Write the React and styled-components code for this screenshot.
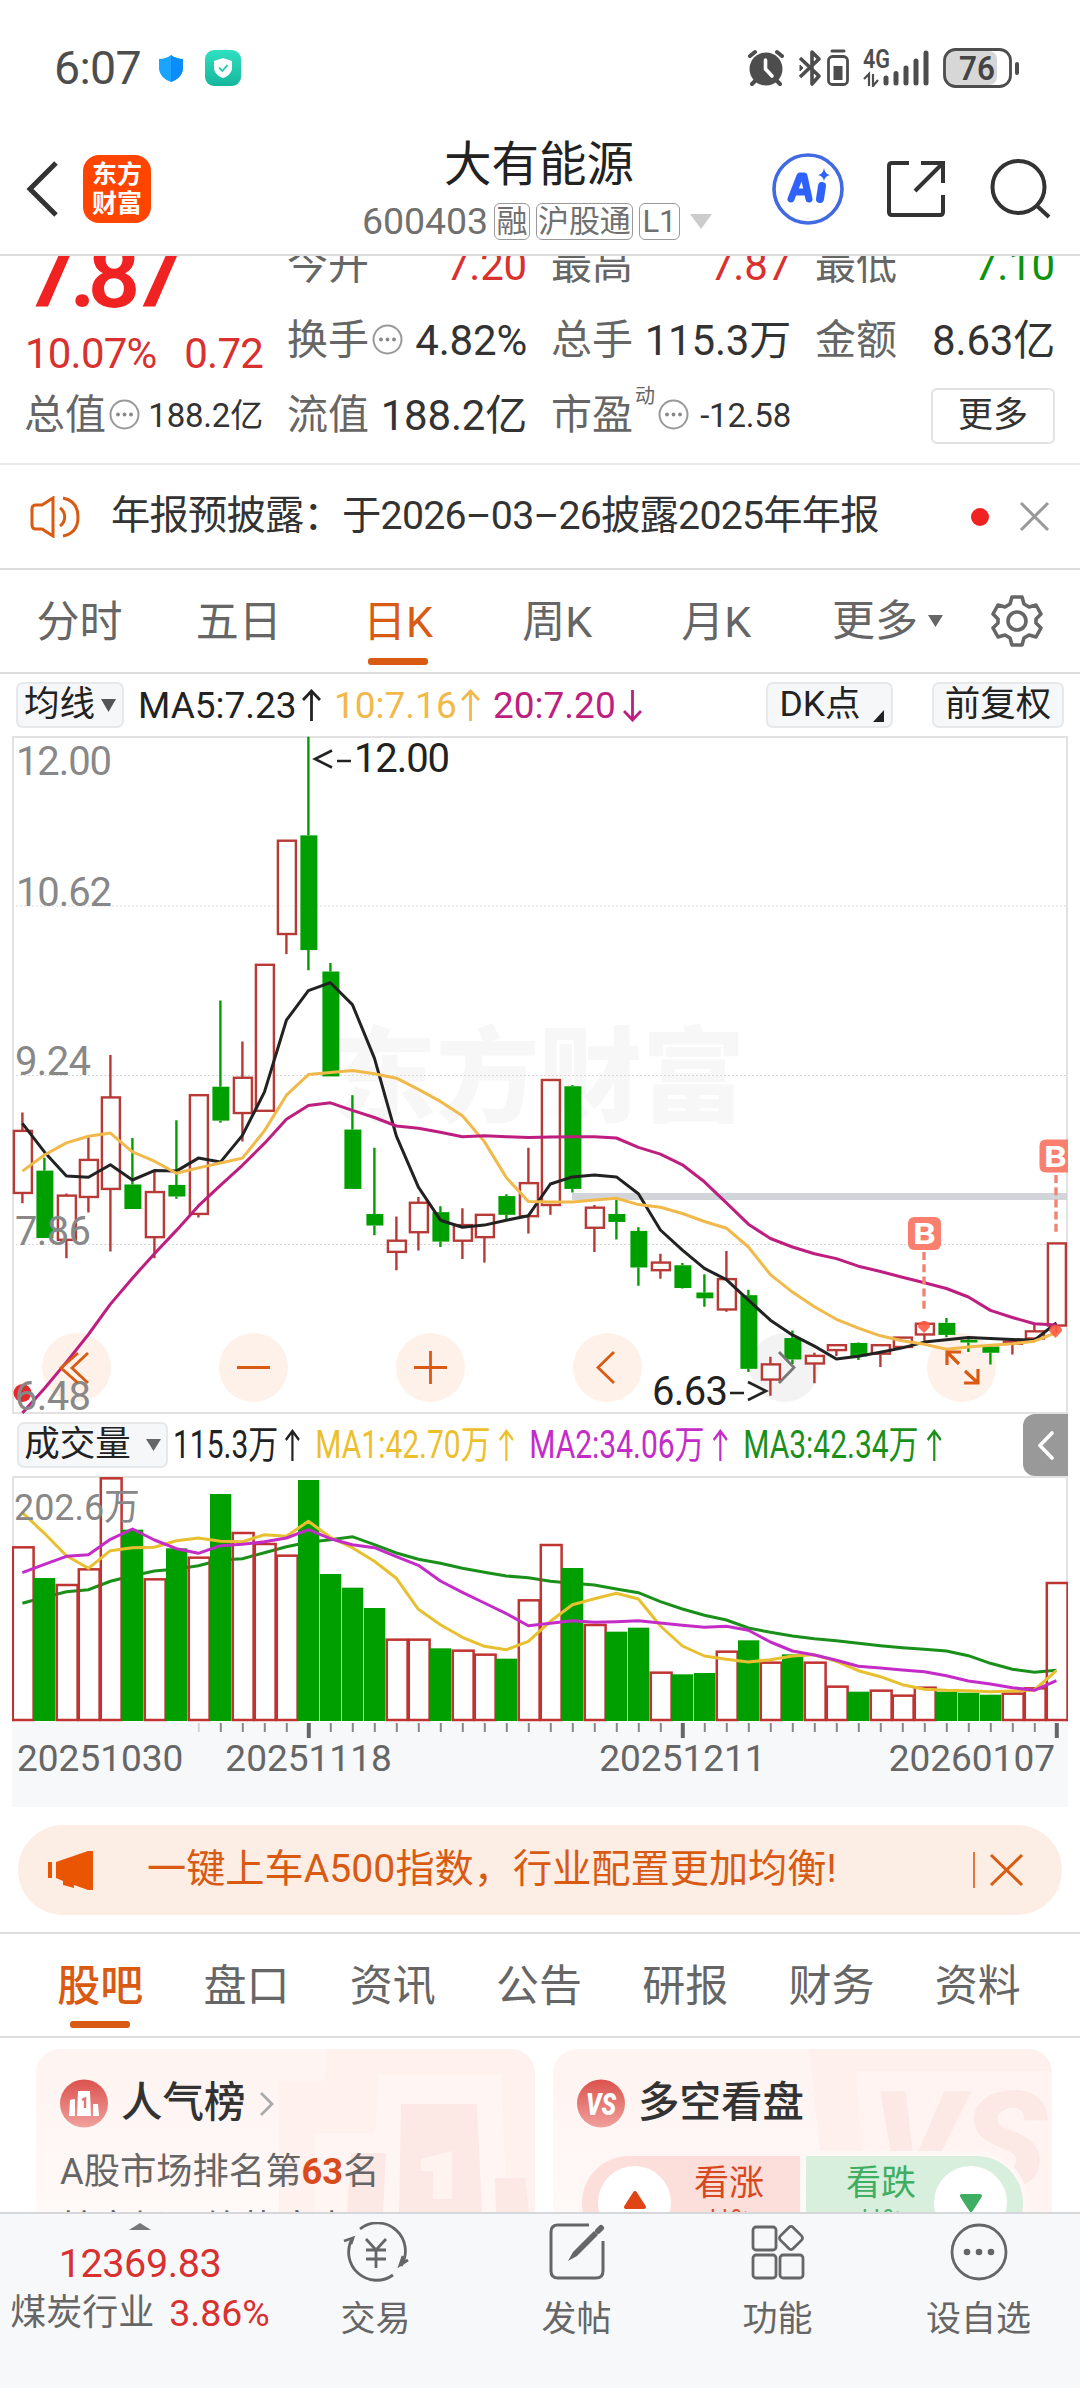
import { Fragment } from 'react';
import styled, { createGlobalStyle } from 'styled-components';

const RED = '#d93030';
const ORANGE = '#d95a13';
const GREY = '#666';
const UP = '#b73a36';
const DOWN = '#009f00';

// Velas: [tipo, máximo, cuerpo arriba, cuerpo abajo, mínimo]
const candles = [
  ['u', 857, 898, 1037, 1060], ['d', 958, 987, 1138, 1138], ['u', 1038, 1043, 1142, 1183],
  ['u', 912, 963, 1046, 1081], ['u', 728, 823, 1028, 1168], ['d', 914, 1018, 1073, 1073],
  ['u', 985, 1035, 1136, 1183], ['d', 874, 1019, 1045, 1050], ['u', 817, 818, 1084, 1092],
  ['d', 606, 799, 875, 880], ['u', 698, 779, 858, 922], ['u', 526, 526, 853, 853],
  ['u', 248, 248, 457, 502], ['d', 15, 236, 493, 538], ['d', 522, 541, 776, 776],
  ['d', 818, 895, 1028, 1028], ['d', 936, 1084, 1110, 1132], ['u', 1090, 1144, 1169, 1210],
  ['u', 1046, 1059, 1125, 1166], ['d', 1067, 1080, 1146, 1158], ['u', 1071, 1109, 1144, 1185],
  ['u', 1086, 1086, 1136, 1193], ['d', 1040, 1044, 1086, 1098], ['u', 936, 1015, 1089, 1128],
  ['u', 784, 784, 1064, 1086], ['d', 795, 798, 1028, 1036], ['u', 1064, 1070, 1115, 1169],
  ['d', 1053, 1084, 1102, 1141], ['d', 1114, 1122, 1204, 1245], ['u', 1173, 1193, 1210, 1229],
  ['d', 1194, 1199, 1250, 1251], ['d', 1219, 1260, 1273, 1292], ['u', 1167, 1230, 1298, 1303],
  ['d', 1254, 1266, 1431, 1438], ['u', 1404, 1421, 1455, 1491], ['d', 1345, 1362, 1410, 1420],
  ['u', 1395, 1402, 1419, 1463], ['u', 1377, 1378, 1389, 1402], ['d', 1372, 1373, 1403, 1411],
  ['u', 1378, 1378, 1397, 1427], ['u', 1361, 1361, 1382, 1382], ['u', 1324, 1330, 1354, 1368],
  ['d', 1317, 1328, 1355, 1360], ['d', 1358, 1366, 1372, 1393], ['d', 1378, 1381, 1395, 1421],
  ['u', 1369, 1370, 1375, 1399], ['u', 1330, 1347, 1363, 1366], ['u', 1150, 1150, 1334, 1350],
];

const priceLines = [
  { color: '#222', data: [881, 945, 999, 1002, 974, 1008, 987, 988, 959, 968, 908, 811, 650, 584, 566, 615, 735, 910, 1024, 1098, 1114, 1109, 1098, 1088, 1017, 1001, 997, 1001, 1039, 1120, 1165, 1206, 1231, 1277, 1322, 1355, 1380, 1409, 1403, 1394, 1384, 1371, 1366, 1361, 1363, 1365, 1367, 1328] },
  { color: '#f1b94a', data: [988, 952, 925, 910, 903, 945, 966, 993, 981, 970, 959, 898, 818, 772, 767, 763, 770, 780, 805, 832, 864, 922, 1003, 1056, 1057, 1057, 1053, 1049, 1063, 1069, 1083, 1101, 1116, 1158, 1220, 1259, 1292, 1320, 1340, 1357, 1368, 1376, 1387, 1382, 1378, 1375, 1369, 1350] },
  { color: '#bd1e7f', data: [1530, 1475, 1416, 1354, 1286, 1228, 1173, 1121, 1066, 1020, 975, 926, 872, 841, 835, 852, 868, 887, 892, 901, 911, 909, 911, 913, 912, 911, 911, 914, 935, 950, 974, 1012, 1059, 1107, 1139, 1158, 1173, 1184, 1201, 1213, 1226, 1238, 1251, 1270, 1300, 1316, 1330, 1333] },
];

const volumes = [
  439, 534, 552, 505, 232, 389, 535, 445, 470, 282, 396, 429, 464, 240, 522, 563,
  624, 716, 716, 745, 749, 761, 776, 598, 432, 504, 672, 695, 683, 815, 823, 819,
  752, 721, 785, 763, 785, 857, 875, 869, 884, 860, 875, 878, 884, 878, 862, 546,
];

const volumeLines = [
  { color: '#e8c02f', data: [338, 400, 467, 505, 452, 443, 442, 422, 414, 424, 425, 404, 409, 364, 412, 443, 484, 535, 628, 674, 712, 739, 749, 724, 664, 614, 596, 580, 597, 678, 738, 768, 778, 786, 779, 768, 764, 784, 812, 830, 854, 868, 871, 872, 875, 873, 870, 812] },
  { color: '#c42cc8', data: [518, 493, 469, 464, 418, 387, 420, 446, 460, 437, 433, 425, 414, 389, 416, 434, 443, 470, 496, 543, 577, 609, 641, 677, 670, 662, 667, 665, 662, 669, 676, 682, 679, 691, 726, 753, 765, 781, 799, 804, 810, 815, 827, 843, 852, 863, 871, 842] },
];
const volumeBase = { color: '#1a901a', data: [610, 592, 575, 569, 544, 527, 513, 507, 497, 480, 476, 458, 440, 427, 419, 410, 434, 459, 478, 490, 505, 517, 528, 533, 544, 550, 555, 567, 578, 605, 627, 646, 660, 684, 697, 708, 716, 722, 730, 737, 743, 748, 753, 767, 790, 808, 817, 811] };

// Cada vela ocupa 22px
const cx = (i) => 10.4 + i * 22;
const py = (v) => v / 2.24 - 6;
const vy = (v) => v / 3 - 76;
const toPoints = (data, scale) => data.map((v, i) => `${cx(i)},${scale(v).toFixed(1)}`).join(' ');

function Arrow({ down }) {
  return <svg width='19' height='33' viewBox='0 0 19 33' fill='none' stroke='currentColor' strokeWidth='2.8'>
    <path d={down ? 'M9.5 1V31M1 22L9.5 31L18 22' : 'M9.5 32V2M1 11L9.5 2L18 11'}/>
  </svg>
}

function Dots() {
  return <svg width='31' height='31' viewBox='0 0 31 31'>
    <circle cx='15.5' cy='15.5' r='14' fill='none' stroke='#999' strokeWidth='2'/>
    <circle cx='9' cy='15.5' r='1.9' fill='#888'/>
    <circle cx='15.5' cy='15.5' r='1.9' fill='#888'/>
    <circle cx='22' cy='15.5' r='1.9' fill='#888'/>
  </svg>
}

function Triangle({ w, h, color, up }) {
  return <svg width={w} height={h} viewBox='0 0 10 10' preserveAspectRatio='none'>
    <path d={up ? 'M0 10L5 0L10 10Z' : 'M0 0H10L5 10Z'} fill={color}/>
  </svg>
}

// Triángulo de esquinas redondeadas de los botones de voto
function VoteMark({ down }) {
  return <svg width='24' height='20' viewBox='0 0 24 20'>
    <path
      d={down ? 'M3 3H21L12 17Z' : 'M3 17H21L12 3Z'}
      fill={down ? '#3fae63' : '#e04414'}
      stroke={down ? '#3fae63' : '#e04414'}
      strokeLinejoin='round'
      strokeWidth='4'/>
  </svg>
}

function StatusBar() {
  return <Status>
    <Clock>6:07</Clock>
    <svg width='24' height='27' viewBox='0 0 24 27'>
      <path d='M12 0C15 2.500 19 3.800 24 4V13C24 20 18 25 12 27C6 25 0 20 0 13V4C5 3.800 9 2.500 12 0Z' fill='#1ba4ff'/>
      <path d='M12 0C15 2.500 19 3.800 24 4V13C24 20 18 25 12 27Z' fill='#0a8dfb'/>
    </svg>
    <GreenShield>
      <svg width='18' height='20' viewBox='0 0 18 20'>
        <path d='M9 0L18 3V10C18 15 13 19 9 20C5 19 0 15 0 10V3Z' fill='#fff'/>
        <path d='M5 9.500L8.300 13L13.500 7' fill='none' stroke='#1fc9a8' strokeWidth='1.8'/>
      </svg>
    </GreenShield>
    <StatusIcons>
      <svg width='38' height='38' viewBox='0 0 38 38'>
        <g stroke='#4d4d4d' strokeWidth='4' strokeLinecap='round'>
          <path d='M3 7L8 3M30 3L35 7M9 31L5 35M29 31L33 35'/>
        </g>
        <circle cx='19' cy='20' r='16.500' fill='#4d4d4d'/>
        <path d='M18.500 11V20L25 27' stroke='#fff' strokeWidth='3.600' fill='none' strokeLinecap='round'/>
      </svg>
      <svg width='52' height='38' viewBox='0 0 52 38' fill='none' stroke='#4d4d4d' strokeWidth='3.600' strokeLinejoin='round'>
        <path d='M2 9L21 27L14 35V3L21 10L2 28'/>
        <path d='M2 16L5 19L2 22Z' fill='#4d4d4d' strokeWidth='1'/>
        <rect x='30.500' y='7.500' width='19' height='28' rx='4' strokeWidth='2.800'/>
        <path d='M34 2H46' strokeLinecap='round' strokeWidth='3'/>
        <rect x='35.500' y='17' width='9' height='14' fill='#4d4d4d' stroke='none'/>
      </svg>
      <svg width='67' height='38' viewBox='0 0 67 38'>
        <text x='0' y='19' fontSize='25' fontWeight='600' fill='#4d4d4d' textLength='27' lengthAdjust='spacingAndGlyphs'>4G</text>
        <path d='M1 30L6 25V37M10 25V37L15 31' stroke='#4d4d4d' strokeWidth='2.200' fill='none'/>
        <g stroke='#4d4d4d' strokeWidth='5' strokeLinecap='round'>
          <path d='M23 29V34M33 24.500V34M43 19V34M53 12V34M63 4V34'/>
        </g>
      </svg>
      <svg width='76' height='40' viewBox='0 0 76 40'>
        <rect x='3' y='3' width='51' height='34' rx='8' fill='#d7d7d7'/>
        <rect x='1.500' y='1.500' width='66' height='37' rx='11' fill='none' stroke='#4d4d4d' strokeWidth='2.800'/>
        <path d='M74 16V25' stroke='#4d4d4d' strokeWidth='4' strokeLinecap='round'/>
        <text x='16' y='32' fontSize='34' fontWeight='600' fill='#444' textLength='36' lengthAdjust='spacingAndGlyphs'>76</text>
      </svg>
    </StatusIcons>
  </Status>
}

function Header() {
  return <HeaderBar>
    <svg width='33' height='56' viewBox='0 0 33 56' fill='none' stroke='#333' strokeWidth='5'>
      <path d='M30 2L4 28L30 54'/>
    </svg>
    <Logo><span>东方</span><span>财富</span></Logo>
    <TitleBox>
      <StockName>大有能源</StockName>
      <StockCode>
        600403
        <Tag $w={36}>融</Tag>
        <Tag $w={97}>沪股通</Tag>
        <Tag $w={41}>L1</Tag>
        <Triangle w={22} h={15} color='#ccc'/>
      </StockCode>
    </TitleBox>
    <svg width='72' height='72' viewBox='0 0 72 72'>
      <circle cx='36' cy='36' r='34' fill='none' stroke='#4169e1' strokeWidth='3.600'/>
      <path d='M19 46L28 23H32L37 46M23 39H35' fill='none' stroke='#2f62fa' strokeWidth='7' strokeLinecap='round' strokeLinejoin='round'/>
      <path d='M50 33L48 46' stroke='#2f62fa' strokeWidth='8' strokeLinecap='round'/>
      <path d='M52 15Q53 21 58 22Q53 23 52 28Q51 23 46 22Q51 21 52 15Z' fill='#2f62fa'/>
    </svg>
    <svg width='60' height='60' viewBox='0 0 60 60' fill='none' stroke='#333' strokeWidth='4'>
      <path d='M23 4H6Q3 4 3 7V53Q3 56 6 56H54Q57 56 57 53V36M35 4H57V24M57 4L29 32'/>
    </svg>
    <svg width='62' height='60' viewBox='0 0 62 60' fill='none' stroke='#333' strokeWidth='4'>
      <circle cx='28.500' cy='28' r='26'/>
      <path d='M46 46L59 58'/>
    </svg>
  </HeaderBar>
}

function Quotes() {
  return <QuoteSection>
    <QuoteGrid>
      <PriceCell>
        <Price>7.87</Price>
        <Change><span>10.07%</span><span>0.72</span></Change>
      </PriceCell>
      <Cell><Label>今开</Label><Value $color={RED}>7.20</Value></Cell>
      <Cell><Label>最高</Label><Value $color={RED}>7.87</Value></Cell>
      <Cell><Label>最低</Label><Value $color='#0c930c'>7.10</Value></Cell>
      <Cell><Label>换手</Label><Dots/><Value>4.82%</Value></Cell>
      <Cell><Label>总手</Label><Value>115.3万</Value></Cell>
      <Cell><Label>金额</Label><Value>8.63亿</Value></Cell>
      <Cell><Label>总值</Label><Dots/><Value $small>188.2亿</Value></Cell>
      <Cell><Label>流值</Label><Value>188.2亿</Value></Cell>
      <Cell><Label>市盈</Label><Sup>动</Sup><Dots/><Value $small>-12.58</Value></Cell>
      <Cell><MoreButton>更多</MoreButton></Cell>
    </QuoteGrid>
  </QuoteSection>
}

function PriceChart() {
  return <ChartBox>
    <svg width='1056' height='678' viewBox='0 0 1056 678'>
      <text x='321' y='378' textLength='412' fontSize='103' fontWeight='900' fill='#f7f7f7'>东方财富</text>
      <g stroke='#d9d9d9' strokeWidth='1.200' strokeDasharray='2 2'>
        <path d='M0 170H1056M0 339.500H1056M0 508.500H1056'/>
      </g>
      <path d='M1 678V1H1055V678' fill='none' stroke='#e2e2e2' strokeWidth='2'/>
      <path d='M0 677H1056' stroke='#e2e2e2' strokeWidth='2'/>
      {[64.5, 241.5, 418.5, 595.5, 772.5, 949.5].map((x) =>
        <circle key={x} cx={x} cy='631.500' r='34.500' fill={x === 772.5 ? '#f3f3f3' : '#fef1ea'}/>)}
      <path d='M560 460.500H1055' stroke='#d1d4d9' strokeWidth='7'/>
      {candles.map(([type, high, top, bottom, low], i) => {
        const color = type === 'u' ? UP : DOWN;
        return <Fragment key={i}>
          <path d={`M${cx(i)} ${py(high)}V${py(top)}M${cx(i)} ${py(bottom)}V${py(low)}`} stroke={color} strokeWidth='2.400'/>
          {type === 'u'
            ? <rect x={cx(i) - 8.5} y={py(top)} width='18' height={py(bottom) - py(top)} fill='#fff' fillOpacity='.6' stroke={color} strokeWidth='2.400'/>
            : <rect x={cx(i) - 8} y={py(top)} width='17' height={py(bottom) - py(top)} fill={color}/>}
        </Fragment>
      })}
      <circle cx='10.500' cy='657' r='9' fill='#e42a2a'/>
      {priceLines.map(({ color, data }) =>
        <polyline key={color} points={toPoints(data, py)} fill='none' stroke={color} strokeWidth='3' strokeLinejoin='round'/>)}
      <g fill='#ff5a44' fillOpacity='.9'>
        <path d='M906 591Q906 585 912 585Q918 585 918 591L912 597Z'/>
        <path d='M1037 595Q1037 589 1043 589Q1050 589 1050 595L1043.500 602Z'/>
      </g>
      <g stroke='#f08472' strokeWidth='3.400' strokeDasharray='8 4.200'>
        <path d='M912 516V574M1044 439V496'/>
      </g>
      <g fill='#f97f6e'>
        <rect x='896' y='481' width='33' height='33' rx='6'/>
        <path d='M1056 403.500H1034Q1027.500 403.500 1027.500 410V430Q1027.500 436.500 1034 436.500H1056Z'/>
      </g>
      <g fill='#fff' fontSize='30' fontWeight='700'>
        <text x='901' y='508' textLength='23' lengthAdjust='spacingAndGlyphs'>B</text>
        <text x='1032' y='430.500' textLength='23' lengthAdjust='spacingAndGlyphs'>B</text>
      </g>
      <g fontSize='40' fill='#888'>
        <text x='4' y='39' textLength='96'>12.00</text>
        <text x='4' y='170' textLength='96'>10.62</text>
        <text x='3' y='339' textLength='76'>9.24</text>
        <text x='3' y='509' textLength='76'>7.86</text>
        <text x='3' y='674' textLength='76'>6.48</text>
      </g>
      <g fontSize='40' fill='#222'>
        <text x='342' y='36' textLength='96'>12.00</text>
        <path d='M320 14.500L303 23L320 31.500M325 25H339' fill='none' stroke='#222' strokeWidth='2.600'/>
        <text x='640' y='669' textLength='76'>6.63</text>
        <path d='M718 657H732M736 646L754 655L736 664' fill='none' stroke='#222' strokeWidth='2.600'/>
      </g>
      <g fill='none' stroke={ORANGE} strokeWidth='2.800'>
        <path d='M66 617L49 632L66 647M76 617L60 632L76 647'/>
        <path d='M225 631.500H258M402 631.500H435M418.500 615V648'/>
        <path d='M602 616L586 631.500L602 647'/>
        <path d='M935 629V616H949M935 616L947 628M966 633V647H952M966 647L953 635' strokeWidth='3.200'/>
      </g>
      <path d='M767 616L782 631.500L767 647' fill='none' stroke='#777' strokeWidth='2.800'/>
    </svg>
  </ChartBox>
}

function VolumeChart() {
  return <ChartBox>
    <svg width='1056' height='246' viewBox='0 0 1056 246'>
      <path d='M1 246V1H1055V246' fill='none' stroke='#e2e2e2' strokeWidth='2'/>
      <polyline points={toPoints(volumeBase.data, vy)} fill='none' stroke={volumeBase.color} strokeWidth='3'/>
      {volumes.map((v, i) => candles[i][0] === 'u'
        ? <rect key={i} x={cx(i) - 9.6} y={vy(v) + 1} width='20.800' height={243 - vy(v)} fill='none' stroke='#bf3330' strokeWidth='2.500'/>
        : <rect key={i} x={cx(i) - 10.4} y={vy(v)} width='21.300' height={245 - vy(v)} fill={DOWN}/>)}
      {volumeLines.map(({ color, data }) =>
        <polyline key={color} points={toPoints(data, vy)} fill='none' stroke={color} strokeWidth='3' strokeLinejoin='round'/>)}
      <text x='2' y='43.500' fontSize='37' fill='#888' textLength='126' lengthAdjust='spacingAndGlyphs'>202.6万</text>
    </svg>
  </ChartBox>
}

function Axis() {
  const ticks = Array.from({ length: 40 }, (_, i) => i + 8);
  return <AxisBox>
    <svg width='1056' height='18' viewBox='0 0 1056 18'>
      {ticks.map((i) => {
        const big = i === 13 || i === 30 || i === 47;
        return <path key={i} d={`M${cx(i) + 0.4} 1V${big ? 16 : 10}`} stroke={big ? '#666' : '#888'} strokeWidth={big ? 4 : 2} opacity={i === 8 ? 0.3 : 1}/>
      })}
    </svg>
    <Dates>
      <span>20251030</span><span>20251118</span><span>20251211</span><span>20260107</span>
    </Dates>
  </AxisBox>
}

function Promo() {
  return <PromoBar>
    <svg width='46' height='41' viewBox='0 0 46 41' fill='#ea5504'>
      <path d='M0 12H4V28H0ZM8 12L40 1H45V40H40L26 35V38L15 35V31L8 28Z'/>
    </svg>
    <PromoText>一键上车A500指数，行业配置更加均衡!</PromoText>
    <svg width='52' height='38' viewBox='0 0 52 38' fill='none' stroke={ORANGE}>
      <path d='M1 1V37' strokeWidth='1.600'/>
      <path d='M18 4L49 34M49 4L18 34' strokeWidth='3'/>
    </svg>
  </PromoBar>
}

function Cards() {
  return <CardRow>
    <Card>
      <CardArt width='256' height='164' viewBox='0 0 256 164'>
        <path d='M48 0H256V164H0V33H46Z' fill='#fef1ee'/>
        <path d='M100 26H222L228 164H36V84H96Z' fill='#fff6f3'/>
        <path d='M72 104H107L104 164H68ZM122 55H198L203 164H120ZM216 129H246L250 164H217Z' fill='#fce8e5'/>
        <path d='M142 110L173 102V150H154V122H142Z' fill='#fff3f0'/>
      </CardArt>
      <CardHead>
        <svg width='48' height='49' viewBox='0 0 48 49'>
          <linearGradient id='badge' x1='0' y1='0' x2='0' y2='1'>
            <stop offset='0' stopColor='#dc524d'/>
            <stop offset='1' stopColor='#f0a19d'/>
          </linearGradient>
          <circle cx='24' cy='24.500' r='24' fill='url(#badge)'/>
          <path d='M10 21L15 20V37H9ZM18 12H30L31 37H17ZM33 25H38L39 37H33Z' fill='#fff'/>
          <path d='M22 21L25 19.500V29' fill='none' stroke='#e4726d' strokeWidth='2.400'/>
        </svg>
        <CardTitle>人气榜</CardTitle>
        <svg width='15' height='26' viewBox='0 0 15 26' fill='none' stroke='#aaa' strokeWidth='2.800'>
          <path d='M2 2L13 13L2 24'/>
        </svg>
      </CardHead>
      <CardText>A股市场排名第<b>63</b>名</CardText>
      <CardText $third>较市场平均热度高</CardText>
    </Card>
    <Card>
      <CardArt width='243' height='164' viewBox='0 0 243 164'>
        <path d='M0 0H243V164H18Z' fill='#fdf0ed'/>
        <path d='M46 22H243V164H60Z' fill='#fff4f1'/>
        <text x='62' y='140' fontSize='136' fontWeight='900' fontStyle='italic' fill='#fce8e5' textLength='176' lengthAdjust='spacingAndGlyphs'>VS</text>
      </CardArt>
      <CardHead>
        <svg width='48' height='49' viewBox='0 0 48 49'>
          <circle cx='24' cy='24.500' r='24' fill='url(#badge)'/>
          <text x='9' y='36' fontSize='31' fontWeight='900' fontStyle='italic' fill='#fff' textLength='30' lengthAdjust='spacingAndGlyphs'>VS</text>
        </svg>
        <CardTitle>多空看盘</CardTitle>
      </CardHead>
      <VotePill>
        <VoteHalf>
          <VoteKnob><VoteMark/></VoteKnob>
          <VoteLabel><span>看涨</span><small>**%</small></VoteLabel>
        </VoteHalf>
        <VoteHalf $fall>
          <VoteLabel><span>看跌</span><small>**%</small></VoteLabel>
          <VoteKnob $down><VoteMark down/></VoteKnob>
        </VoteHalf>
      </VotePill>
    </Card>
  </CardRow>
}

function BottomBar() {
  return <Bottom>
    <Industry>
      <Triangle w={22} h={7} color='#777' up/>
      <IndexValue>12369.83</IndexValue>
      <IndexLine>煤炭行业<b>3.86%</b></IndexLine>
    </Industry>
    <NavItem>
      <svg width='66' height='60' viewBox='0 0 66 60' fill='none' stroke='#666' strokeWidth='2.800'>
        <path d='M17 7A28 28 0 0 1 58 44M50 53A28 28 0 0 1 9 17'/>
        <path d='M1 19L10 16L8 22M65 38L57 43L60 34'/>
        <path d='M23 17L33 28L43 17M33 28V46M23 28H43M23 37H43'/>
      </svg>
      交易
    </NavItem>
    <NavItem>
      <svg width='56' height='60' viewBox='0 0 56 60' fill='none' stroke='#666' strokeWidth='3'>
        <path d='M40 3H9Q2 3 2 10V49Q2 56 9 56H47Q54 56 54 49V19'/>
        <path d='M19 39L24 30L45 9L49 13L28 34Z' fill='#666' stroke='none'/>
        <path d='M49 9L52 6' strokeWidth='6' strokeLinecap='round'/>
      </svg>
      发帖
    </NavItem>
    <NavItem>
      <svg width='54' height='60' viewBox='0 0 54 60' fill='none' stroke='#666' strokeWidth='2.800'>
        <rect x='2' y='5' width='23' height='23' rx='3'/>
        <rect x='2' y='33' width='23' height='23' rx='3'/>
        <rect x='29' y='33' width='23' height='23' rx='3'/>
        <rect x='31' y='7' width='18' height='18' rx='3' transform='rotate(45 40 16)'/>
      </svg>
      功能
    </NavItem>
    <NavItem>
      <svg width='60' height='60' viewBox='0 0 60 60'>
        <circle cx='30' cy='30' r='27' fill='none' stroke='#666' strokeWidth='2.800'/>
        <g fill='#666'>
          <circle cx='18' cy='30' r='3.300'/><circle cx='30' cy='30' r='3.300'/><circle cx='42' cy='30' r='3.300'/>
        </g>
      </svg>
      设自选
    </NavItem>
  </Bottom>
}

function App() {
  return <Page>
    <GlobalStyle/>
    <StatusBar/>
    <Header/>
    <Quotes/>
    <Notice>
      <svg width='52' height='42' viewBox='0 0 52 42' fill='none' stroke={ORANGE} strokeWidth='3'>
        <path d='M23 2L12 9H6Q2 9 2 13V29Q2 33 6 33H12L23 40ZM30 12A11 11 0 0 1 30 30M33 2Q48 5 48 21Q48 37 33 40'/>
      </svg>
      <NoticeText>年报预披露：于2026–03–26披露2025年年报</NoticeText>
      <RedDot/>
      <svg width='31' height='31' viewBox='0 0 31 31' stroke='#999' strokeWidth='3'>
        <path d='M2 2L29 29M29 2L2 29'/>
      </svg>
    </Notice>
    <PeriodTabs>
      <PeriodTab>分时</PeriodTab>
      <PeriodTab>五日</PeriodTab>
      <PeriodTab $active>日K</PeriodTab>
      <PeriodTab>周K</PeriodTab>
      <PeriodTab>月K</PeriodTab>
      <PeriodMore>更多<Triangle w={15} h={12} color='#666'/></PeriodMore>
      <svg width='52' height='54' viewBox='0 0 52 54' fill='none' stroke='#666' strokeWidth='3.600' strokeLinejoin='round'>
        <path d='M21 3H31L33 10L38 13L45 11L50 20L45 25V29L50 34L45 43L38 41L33 44L31 51H21L19 44L14 41L7 43L2 34L7 29V25L2 20L7 11L14 13L19 10Z'/>
        <circle cx='26' cy='27' r='9'/>
      </svg>
    </PeriodTabs>
    <MaRow>
      <ChipButton $w={108}>均线<Triangle w={15} h={13} color='#555'/></ChipButton>
      <MaValue $w={183} $ml={14} $color='#222'>MA5:7.23<Arrow/></MaValue>
      <MaValue $w={146} $ml={13} $color='#f1b94a'>10:7.16<Arrow/></MaValue>
      <MaValue $w={149} $ml={13} $color='#bd1e7f'>20:7.20<Arrow down/></MaValue>
      <ChipButton $w={127} $push>DK点<Corner/></ChipButton>
      <ChipButton $w={132} $ml={39}>前复权</ChipButton>
    </MaRow>
    <PriceChart/>
    <VolumeRow>
      <ChipButton $w={151} $gap={15}>成交量<Triangle w={15} h={12} color='#666'/></ChipButton>
      <VolumeLegend>
        <MaValue $w={163} $color='#222'>115.3万<Arrow/></MaValue>
        <MaValue $w={255} $color='#ecc02c'>MA1:42.70万<Arrow/></MaValue>
        <MaValue $w={255} $color='#c42cc8'>MA2:34.06万<Arrow/></MaValue>
        <MaValue $w={255} $color='#1a901a'>MA3:42.34万<Arrow/></MaValue>
      </VolumeLegend>
      <SideHandle>
        <svg width='16' height='29' viewBox='0 0 16 29' fill='none' stroke='#fff' strokeWidth='3.600' strokeLinecap='round'>
          <path d='M14 2L2 14.500L14 27'/>
        </svg>
      </SideHandle>
    </VolumeRow>
    <VolumeChart/>
    <Axis/>
    <Promo/>
    <InfoTabs>
      {['股吧', '盘口', '资讯', '公告', '研报', '财务', '资料'].map((name, i) =>
        <InfoTab key={name} $active={i === 0}>{name}</InfoTab>)}
    </InfoTabs>
    <Cards/>
    <BottomBar/>
  </Page>
}

const GlobalStyle = createGlobalStyle`
  body {
    background: #fff;
    margin: 0;
  }
  * {
    box-sizing: border-box;
  }
  svg {
    display: block;
    flex: none;
  }
`;

const Page = styled.div`
  display: flex;
  flex-direction: column;
  font-family: Roboto, 'Noto Sans CJK SC', sans-serif;
  height: 2388px;
  line-height: 1;
  overflow: hidden;
  white-space: nowrap;
  width: 1080px;
`;

const Status = styled.div`
  align-items: center;
  display: flex;
  flex: none;
  height: 136px;
  padding: 0 61px 0 54px;
`;

const Clock = styled.div`
  color: #4d4d4d;
  font-size: 46.5px;
  letter-spacing: -.7px;
  margin-right: 20px;
  width: 85px;
`;

const GreenShield = styled.div`
  align-items: center;
  background: linear-gradient(#2fe0c0, #16b79c);
  border-radius: 9px;
  display: flex;
  height: 36px;
  justify-content: center;
  margin-left: 22px;
  width: 36px;
`;

const StatusIcons = styled.div`
  align-items: center;
  display: flex;
  gap: 13px;
  margin-left: auto;
`;

const HeaderBar = styled.header`
  align-items: center;
  border-bottom: 2px solid #ddd;
  display: flex;
  flex: none;
  height: 120px;
  padding: 0 0 13px 26px;

  > svg:nth-of-type(2) { margin-left: 60px; }
  > svg:nth-of-type(3) { margin-left: 42px; }
  > svg:nth-of-type(4) { margin-left: 44px; }
`;

const Logo = styled.div`
  align-items: center;
  background: #ff4500;
  border-radius: 16px;
  color: #fff;
  display: flex;
  flex-direction: column;
  font-size: 25px;
  font-weight: 600;
  gap: 4px;
  height: 68px;
  justify-content: center;
  margin-left: 24px;
  width: 68px;
`;

const TitleBox = styled.div`
  align-items: flex-start;
  display: flex;
  flex-direction: column;
  margin-left: 211px;
  width: 350px;
`;

const StockName = styled.h1`
  color: #222;
  font-size: 47.5px;
  font-weight: 400;
  margin: 5px 0 13px 82px;
`;

const StockCode = styled.div`
  align-items: center;
  color: #707070;
  display: flex;
  font-size: 37.5px;
  gap: 6px;
  letter-spacing: -.1px;

  svg { margin-left: 4px; }
`;

const Tag = styled.span`
  align-items: center;
  border: 1.5px solid #999;
  border-radius: 6px;
  display: flex;
  font-size: 31px;
  height: 37px;
  justify-content: center;
  width: ${({ $w }) => $w}px;
`;

const QuoteSection = styled.section`
  border-bottom: 2px solid #eaeaea;
  flex: none;
  height: 209px;
  overflow: hidden;
`;

const QuoteGrid = styled.div`
  display: grid;
  gap: 0 26px;
  grid-template-columns: 237px 238px 238px 238px;
  grid-template-rows: 75px 75px 75px;
  margin: -28px 0 0 26px;
`;

const PriceCell = styled.div`
  grid-row: 1 / 3;
`;

const Price = styled.div`
  color: #f02222;
  font-size: 92px;
  font-weight: 600;
  height: 100px;
  letter-spacing: -8px;
  line-height: 95px;
  margin-left: -1px;
`;

const Change = styled.div`
  color: ${RED};
  display: flex;
  font-size: 42px;
  height: 50px;
  justify-content: space-between;
  letter-spacing: -.8px;
  line-height: 51px;
  margin-left: -1px;
`;

const Cell = styled.div`
  align-items: center;
  display: flex;

  svg { margin: -3px 0 0 3px; }
`;

const Label = styled.span`
  color: ${GREY};
  font-size: 41px;
  margin-left: -2px;
`;

const Value = styled.span`
  color: ${({ $color }) => $color || '#333'};
  font-size: ${({ $small }) => $small ? 33 : 42}px;
  letter-spacing: -.2px;
  margin-left: auto;
`;

const Sup = styled.sup`
  align-self: flex-start;
  color: ${GREY};
  font-size: 20px;
  margin: 8px 0 0 2px;
`;

const MoreButton = styled.button`
  background: #fff;
  border: 2px solid #e2e2e2;
  border-radius: 6px;
  color: #333;
  font: inherit;
  font-size: 35px;
  height: 56px;
  margin-left: auto;
  padding: 0;
  width: 124px;
`;

const Notice = styled.div`
  align-items: center;
  border-bottom: 2px solid #ddd;
  display: flex;
  flex: none;
  height: 105px;
  padding: 0 30px;
`;

const NoticeText = styled.div`
  color: #333;
  flex: 1;
  font-size: 39.3px;
  letter-spacing: -.78px;
  margin-left: 29px;
`;

const RedDot = styled.i`
  background: #f02222;
  border-radius: 50%;
  height: 18px;
  margin-right: 30px;
  width: 18px;
`;

const PeriodTabs = styled.nav`
  align-items: center;
  border-bottom: 2px solid #ddd;
  display: flex;
  flex: none;
  height: 104px;
`;

const PeriodTab = styled.div`
  color: ${({ $active }) => $active ? ORANGE : GREY};
  display: flex;
  font-size: 43px;
  height: 102px;
  justify-content: center;
  line-height: 104px;
  position: relative;
  width: 159.2px;

  &::after {
    background: ${({ $active }) => $active ? ORANGE : 'transparent'};
    border-radius: 3px;
    bottom: 7px;
    content: '';
    height: 7px;
    position: absolute;
    width: 60px;
  }
`;

const PeriodMore = styled.div`
  align-items: center;
  color: ${GREY};
  display: flex;
  font-size: 43px;
  gap: 10px;
  margin: 0 48px 0 36px;
`;

const MaRow = styled.div`
  align-items: center;
  display: flex;
  flex: none;
  height: 62px;
  padding: 0 16px;
`;

const ChipButton = styled.div`
  align-items: center;
  background: #f6f7f9;
  border: 2px solid #e6e8ea;
  border-radius: 7px;
  color: #222;
  display: flex;
  flex: none;
  font-size: 35.5px;
  gap: ${({ $gap }) => $gap || 6}px;
  height: 46px;
  justify-content: center;
  margin-left: ${({ $push, $ml }) => $push ? 'auto' : `${$ml || 0}px`};
  width: ${({ $w }) => $w}px;
`;

const Corner = styled.i`
  align-self: flex-end;
  border-bottom: 12px solid #222;
  border-left: 11px solid transparent;
  margin: 0 -4px 4px 6px;
`;

const MaValue = styled.div`
  align-items: center;
  color: ${({ $color }) => $color};
  display: flex;
  flex: none;
  font-size: 37px;
  justify-content: space-between;
  margin-left: ${({ $ml }) => $ml || 0}px;
  width: ${({ $w }) => $w}px;
`;

const ChartBox = styled.div`
  flex: none;
  margin-left: 12px;
`;

const VolumeRow = styled.div`
  align-items: center;
  display: flex;
  flex: none;
  height: 62px;
  padding: 0 12px 0 17px;
`;

const VolumeLegend = styled.div`
  display: flex;
  flex: 1;
  gap: 20px;
  margin-left: 5px;
  min-width: 0;
  transform: scaleX(.778);
  transform-origin: left;

  ${MaValue} { font-size: 38.5px; }
`;

const SideHandle = styled.div`
  align-items: center;
  background: #999;
  border-radius: 12px 0 0 12px;
  display: flex;
  flex: none;
  height: 62px;
  justify-content: center;
  width: 45px;
`;

const AxisBox = styled.div`
  background: #f7f8fa;
  flex: none;
  height: 85px;
  margin: 0 12px;
`;

const Dates = styled.div`
  color: ${GREY};
  display: flex;
  font-size: 37px;
  line-height: 37px;
  padding: 0 13px 0 5px;

  span:nth-child(2) { margin-left: 42px; }
  span:nth-child(3) { margin-left: auto; }
  span:nth-child(4) { margin-left: 123px; }
`;

const PromoBar = styled.div`
  align-items: center;
  background: #fceee5;
  border-radius: 45px;
  display: flex;
  flex: none;
  height: 90px;
  margin: 18px 18px 17px;
  padding: 0 37px 0 30px;
`;

const PromoText = styled.div`
  color: ${ORANGE};
  flex: 1;
  font-size: 39.2px;
  margin: 0 0 0 53px;
`;

const InfoTabs = styled.nav`
  border-bottom: 2px solid #ddd;
  border-top: 2px solid #ddd;
  display: flex;
  flex: none;
  height: 106px;
  padding: 0 29px 0 27px;
`;

const InfoTab = styled(PeriodTab)`
  flex: 1;
  font-weight: ${({ $active }) => $active ? 500 : 400};
  height: 102px;

  &::after { bottom: 8px; }
`;

const CardRow = styled.div`
  display: flex;
  flex: none;
  gap: 18px;
  height: 174px;
  overflow: hidden;
  padding: 11px 28px 0 36px;
`;

const Card = styled.div`
  background: linear-gradient(#fef4f2, #fffaf8);
  border-radius: 24px 24px 0 0;
  flex: 1;
  height: 200px;
  overflow: hidden;
  padding: 30px 24px 0;
  position: relative;
`;

const CardArt = styled.svg`
  position: absolute;
  right: 0;
  top: 0;
`;

const CardHead = styled.div`
  align-items: center;
  display: flex;
  gap: 13px;
  position: relative;
`;

const CardTitle = styled.h2`
  color: #333;
  font-size: 41.5px;
  font-weight: 500;
  margin: -2px 0 0;
`;

const CardText = styled.div`
  color: ${GREY};
  font-size: 36.3px;
  margin-top: ${({ $third }) => $third ? 21 : 26}px;
  position: relative;

  b {
    color: #da4a1c;
  }
`;

const VotePill = styled.div`
  border: 5px solid #fff7f5;
  border-radius: 52px;
  display: flex;
  gap: 6px;
  height: 104px;
  margin: 23px 0 0 0;
  overflow: hidden;
  position: relative;
  width: 451px;
`;

const VoteHalf = styled.div`
  background: ${({ $fall }) => $fall ? '#d7efdc' : '#fcdeda'};
  color: ${({ $fall }) => $fall ? '#3fae63' : '#d8481f'};
  display: flex;
  flex: 1;
  gap: ${({ $fall }) => $fall ? 18 : 23}px;
  justify-content: ${({ $fall }) => $fall ? 'flex-end' : 'flex-start'};
  padding: 10px 16px;
`;

const VoteKnob = styled.div`
  align-items: center;
  background: #fff;
  border-radius: 50%;
  display: flex;
  height: 73px;
  justify-content: center;
  padding-bottom: ${({ $down }) => $down ? 0 : 5}px;
  width: 73px;
`;

const VoteLabel = styled.div`
  align-items: center;
  display: flex;
  flex-direction: column;
  font-size: 35px;

  small {
    font-size: 28px;
    margin-top: 5px;
  }
`;

const Bottom = styled.footer`
  background: #f7f8fa;
  border-top: 2px solid #d5d7da;
  display: flex;
  flex: 1;
`;

const Industry = styled.div`
  align-items: center;
  display: flex;
  flex-direction: column;
  padding: 9px 0 0 4px;
  width: 276px;
`;

const IndexValue = styled.div`
  color: ${RED};
  font-size: 39.5px;
  line-height: 48px;
  margin-top: 10px;
  letter-spacing: -.4px;
`;

const IndexLine = styled.div`
  color: ${GREY};
  display: flex;
  font-size: 36px;
  gap: 15px;
  line-height: 50px;

  b {
    color: ${RED};
    font-size: 37.5px;
    font-weight: 400;
  }
`;

const NavItem = styled.div`
  align-items: center;
  color: ${GREY};
  display: flex;
  flex: 1;
  flex-direction: column;
  font-size: 35px;
  gap: 20px;
  padding: 8px 2px 0 0;
`;

export default App;
